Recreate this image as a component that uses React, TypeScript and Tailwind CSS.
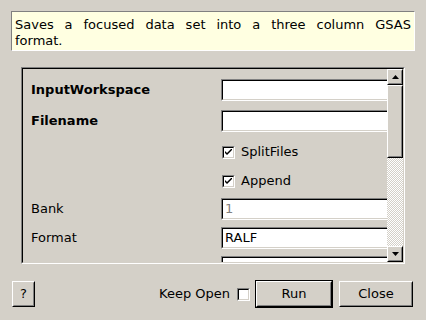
import React from 'react'

const font = { fontFamily: '"DejaVu Sans", sans-serif' }

const Sunken = ({ children, disabled }: { children?: React.ReactNode; disabled?: boolean }) => (
    <div className="h-[22px] w-full border border-t-[#808080] border-l-[#808080] border-r-white border-b-white">
        <div
            className={`flex h-full items-center border border-t-black border-l-black border-r-[#d4d0c8] border-b-[#d4d0c8] bg-white px-[2px] text-[13px] ${
                disabled ? 'text-[#808080]' : 'text-black'
            }`}
        >
            {children}
        </div>
    </div>
)

const Check = ({ checked }: { checked?: boolean }) => (
    <div className="h-[13px] w-[13px] shrink-0 border border-t-[#808080] border-l-[#808080] border-r-white border-b-white">
        <div className="flex h-full w-full items-center justify-center border border-t-black border-l-black border-r-[#d4d0c8] border-b-[#d4d0c8] bg-white">
            {checked && (
                <svg width="7" height="7" viewBox="0 0 7 7">
                    <path d="M0 2 L0 4 L2 6 L7 1 L7 -1 L2 4 Z" fill="black" />
                </svg>
            )}
        </div>
    </div>
)

const Raised = ({ children, className }: { children?: React.ReactNode; className?: string }) => (
    <div className={`border border-t-white border-l-white border-r-black border-b-black ${className ?? ''}`}>
        <div className="flex h-full w-full items-center justify-center border border-t-[#d4d0c8] border-l-[#d4d0c8] border-r-[#808080] border-b-[#808080] bg-[#d4d0c8]">
            {children}
        </div>
    </div>
)

const Arrow = ({ up }: { up?: boolean }) => (
    <svg width="7" height="4" viewBox="0 0 7 4">
        <path d={up ? 'M0 4 L7 4 L3.5 0 Z' : 'M0 0 L7 0 L3.5 4 Z'} fill="black" />
    </svg>
)

const rows: { label: string; bold?: boolean; h: string; field: React.ReactNode }[] = [
    { label: 'InputWorkspace', bold: true, h: 'h-[31px]', field: <Sunken /> },
    { label: 'Filename', bold: true, h: 'h-[32px]', field: <Sunken /> },
    {
        label: '',
        h: 'h-[30px]',
        field: (
            <div className="flex items-center gap-[6px] pl-[1px]">
                <Check checked />
                <span className="text-[13px]">SplitFiles</span>
            </div>
        ),
    },
    {
        label: '',
        h: 'h-[28px]',
        field: (
            <div className="flex items-center gap-[6px] pl-[1px]">
                <Check checked />
                <span className="text-[13px]">Append</span>
            </div>
        ),
    },
    { label: 'Bank', h: 'h-[28px]', field: <Sunken disabled>1</Sunken> },
    { label: 'Format', h: 'h-[29px]', field: <Sunken>RALF</Sunken> },
    { label: 'Data Format', h: 'h-[29px]', field: <Sunken>FXYE</Sunken> },
]

export default function App() {
    return (
        <div className="flex h-[320px] w-[426px] flex-col bg-[#d4d0c8] text-[#000]" style={font}>
            <div className="mx-[11px] mt-[11px] h-[40px] w-[404px] border border-t-[#808080] border-l-[#808080] border-r-white border-b-white bg-[#ffffe1] px-[3px] pt-[5px] text-[13px] leading-[16px] text-black">
                <p className="[text-align-last:justify]">Saves a focused data set into a three column GSAS</p>
                <p>format.</p>
            </div>

            <div className="ml-[21px] mt-[16px] flex h-[197px] w-[384px] border border-t-[#808080] border-l-[#808080] border-r-white border-b-white">
                <div className="flex h-full w-full border border-t-black border-l-black border-r-[#d4d0c8] border-b-[#d4d0c8]">
                    <div className="flex min-w-0 flex-1 flex-col overflow-hidden pt-[5px]">
                        {rows.map((row, i) => (
                            <div key={i} className={`flex shrink-0 items-center ${row.h}`}>
                                <div
                                    className={`w-[198px] shrink-0 pl-[8px] text-[13px] ${
                                        row.bold ? 'font-bold' : ''
                                    }`}
                                >
                                    {row.label}
                                </div>
                                <div className="w-[190px] shrink-0">{row.field}</div>
                            </div>
                        ))}
                    </div>
                    <div className="flex w-[16px] shrink-0 flex-col">
                        <Raised className="h-[16px] w-[16px]">
                            <Arrow up />
                        </Raised>
                        <Raised className="h-[73px] w-[16px]" />
                        <div className="flex-1 bg-[repeating-conic-gradient(#ffffff_0%_25%,#d4d0c8_0%_50%)] bg-[length:2px_2px]" />
                        <Raised className="h-[16px] w-[16px]">
                            <Arrow />
                        </Raised>
                    </div>
                </div>
            </div>

            <div className="mt-[16px] flex items-center pl-[12px] pr-[13px] text-[13px]">
                <Raised className="h-[26px] w-[23px]">?</Raised>
                <div className="flex-1" />
                <span>Keep Open</span>
                <div className="ml-[7px]">
                    <Check />
                </div>
                <div className="ml-[5px] border border-black">
                    <Raised className="h-[26px] w-[76px]">Run</Raised>
                </div>
                <Raised className="ml-[6px] h-[26px] w-[74px]">Close</Raised>
            </div>
        </div>
    )
}
